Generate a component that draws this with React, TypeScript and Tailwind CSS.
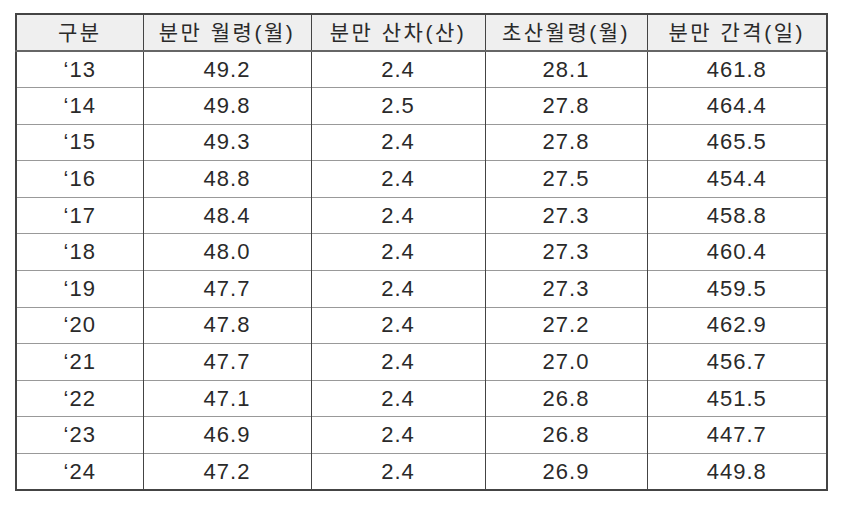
import React from 'react';

const headers = ['구분', '분만 월령(월)', '분만 산차(산)', '초산월령(월)', '분만 간격(일)'];

const rows = [
  ['‘13', '49.2', '2.4', '28.1', '461.8'],
  ['‘14', '49.8', '2.5', '27.8', '464.4'],
  ['‘15', '49.3', '2.4', '27.8', '465.5'],
  ['‘16', '48.8', '2.4', '27.5', '454.4'],
  ['‘17', '48.4', '2.4', '27.3', '458.8'],
  ['‘18', '48.0', '2.4', '27.3', '460.4'],
  ['‘19', '47.7', '2.4', '27.3', '459.5'],
  ['‘20', '47.8', '2.4', '27.2', '462.9'],
  ['‘21', '47.7', '2.4', '27.0', '456.7'],
  ['‘22', '47.1', '2.4', '26.8', '451.5'],
  ['‘23', '46.9', '2.4', '26.8', '447.7'],
  ['‘24', '47.2', '2.4', '26.9', '449.8'],
];

const widths = ['w-[127px]', 'w-[168px]', 'w-[174px]', 'w-[162px]', 'w-[180px]'];

export default function App() {
  return (
    <div className="w-[850px] h-[505px] bg-white pt-[13px] pl-[15px] font-['Liberation_Sans','Noto_Sans_CJK_KR',sans-serif] text-[#2a2a2a]">
      <table className="border-collapse table-fixed border-2 border-[#444]">
        <colgroup>
          {widths.map((w, i) => (
            <col key={i} className={w} />
          ))}
        </colgroup>
        <thead>
          <tr className="h-[37px] bg-[#efefef] border-b-2 border-[#666]">
            {headers.map((h, i) => (
              <th
                key={i}
                className="font-normal text-[21px] tracking-[2.5px] text-center border-l border-[#444] first:border-l-0 p-0 leading-none"
              >
                {h}
              </th>
            ))}
          </tr>
        </thead>
        <tbody>
          {rows.map((r, ri) => (
            <tr key={ri} className="h-[36.6px] border-t border-[#999] first:border-t-0">
              {r.map((c, ci) => (
                <td
                  key={ci}
                  className="text-[22px] tracking-[1px] text-center border-l border-[#444] first:border-l-0 p-0 leading-none"
                >
                  {c}
                </td>
              ))}
            </tr>
          ))}
        </tbody>
      </table>
    </div>
  );
}
